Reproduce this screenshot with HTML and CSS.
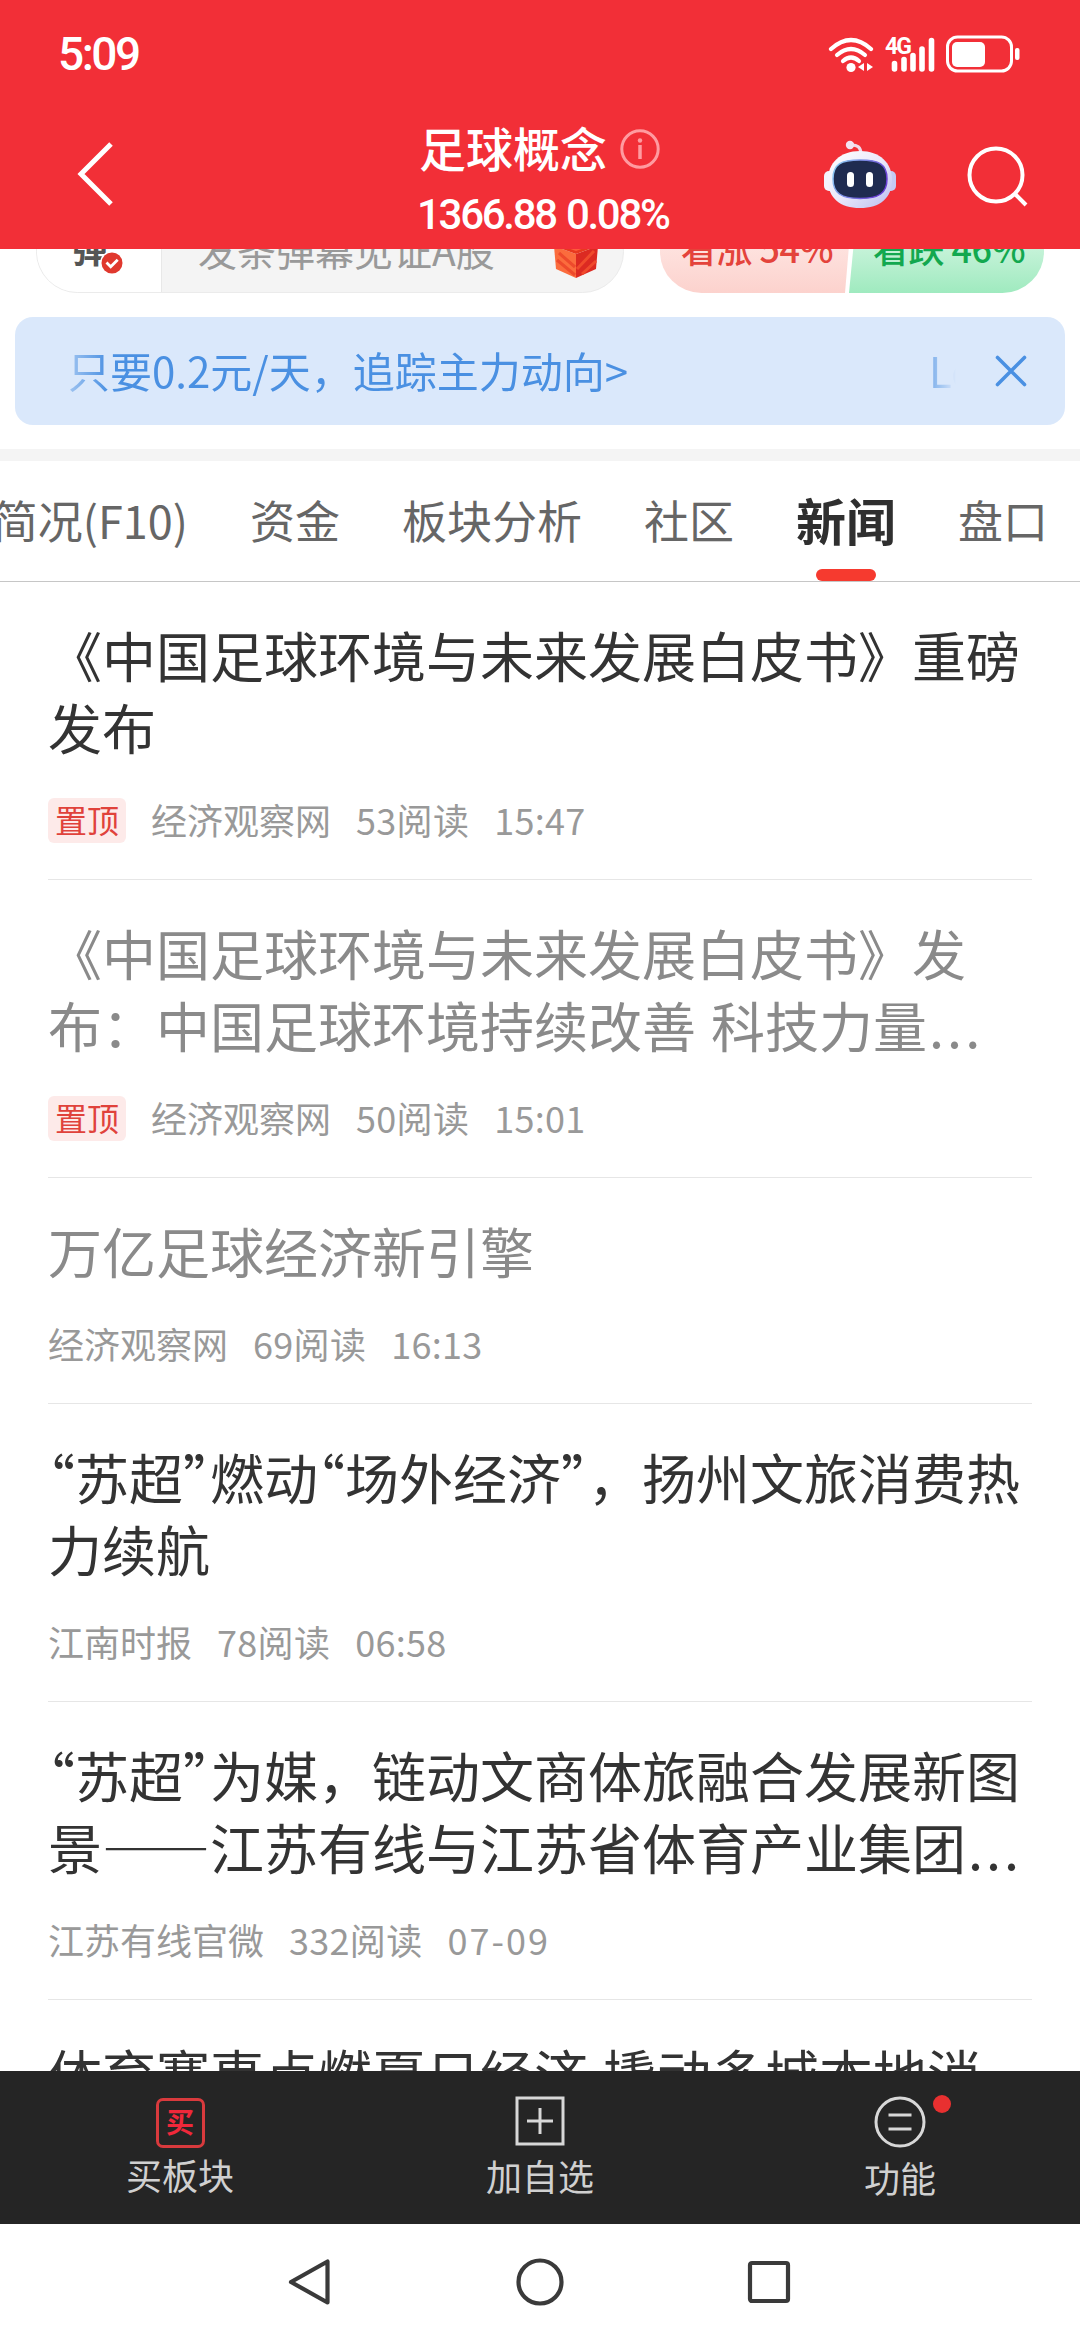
FILE: index.html
```html
<!DOCTYPE html>
<html lang="zh-CN">
<head>
    <meta charset="UTF-8">
    <meta name="viewport" content="width=device-width, initial-scale=1.0">
    <title>足球概念</title>
    <link rel="stylesheet" href="styles.css">
</head>
<body>
    <div class="app">
        <header class="header">
            <div class="status-bar">
                <span class="clock">5:09</span>
                <svg class="status-icons" width="192" height="38" viewBox="0 0 192 38" fill="none" stroke="#fff" stroke-linecap="round">
                    <path d="M3 14 Q23 -4 43 14" stroke-width="4.200"/>
                    <path d="M9 20 Q23 8 37 20" stroke-width="4.200"/>
                    <path d="M15 26 Q23 19 31 26" stroke-width="4.200"/>
                    <circle cx="23" cy="32.500" r="4.600" fill="#fff" stroke="none"/>
                    <path d="M36 28v8l-6-4zM39 28v8l6-4z" fill="#fff" stroke="none"/>
                    <text x="57" y="18.500" class="net-label">4G</text>
                    <path d="M66.500 28.500v5.500M76 24.500v9.500M85 20.500v13.500M94 14v20M103.500 5.500v28.500" stroke-width="5.600"/>
                    <rect x="119.500" y="2" width="64" height="34" rx="10" stroke-width="3"/>
                    <rect x="124" y="7" width="33" height="25" rx="5" fill="#fff" stroke="none"/>
                    <rect x="187" y="13" width="4.500" height="12" rx="2" fill="#fff" stroke="none"/>
                </svg>
            </div>
            <div class="title-bar">
                <svg class="back" width="40" height="68" viewBox="0 0 40 68" fill="none" stroke="#fff" stroke-width="5">
                    <path d="M35 4 L5 34 L35 64"/>
                </svg>
                <div class="title-box">
                    <div class="title">足球概念
                        <svg width="40" height="40" viewBox="0 0 40 40" fill="none" stroke="#ff9ba0" stroke-width="3">
                            <circle cx="20" cy="20" r="18.200"/>
                            <path d="M20 16v14" stroke-width="3.500"/>
                            <circle cx="20" cy="11.500" r="2.200" fill="#ff9ba0" stroke="none"/>
                        </svg>
                    </div>
                    <div class="quote-line">1366.88 0.08%</div>
                </div>
                <svg class="robot" width="74" height="70" viewBox="0 0 74 70">
                    <defs>
                        <linearGradient id="shell" x1="0" y1="0" x2="1" y2="1">
                            <stop offset="0" stop-color="#fff"/>
                            <stop offset="0.5" stop-color="#ebe9fa"/>
                            <stop offset="1" stop-color="#b9bdf0"/>
                        </linearGradient>
                        <linearGradient id="rim" x1="0" y1="0" x2="1" y2="0.4">
                            <stop offset="0" stop-color="#8fd6f5"/>
                            <stop offset="1" stop-color="#6a3fd6"/>
                        </linearGradient>
                    </defs>
                    <rect x="1" y="32" width="12" height="20" rx="5" fill="#f4f3fd"/>
                    <rect x="61" y="32" width="12" height="20" rx="5" fill="#c5cbf4"/>
                    <path d="M27 6 Q38 5 38 15" fill="none" stroke="#f1d9ea" stroke-width="3"/>
                    <circle cx="27" cy="6" r="4.200" fill="#f3e2f2"/>
                    <path d="M37 12 C57 12 69 24 69 41 C69 59 57 69 37 69 C17 69 5 59 5 41 C5 24 17 12 37 12z" fill="url(#shell)"/>
                    <path d="M37 21 C56 21 64 25 64 40 C64 54 56 59.500 37 59.500 C18 59.500 10 54 10 40 C10 25 18 21 37 21z" fill="#1f2b50" stroke="url(#rim)" stroke-width="1.500"/>
                    <rect x="24" y="33" width="7" height="15" rx="3.500" fill="#fff"/>
                    <rect x="43" y="33" width="7" height="15" rx="3.500" fill="#fff"/>
                </svg>
                <svg class="search" width="62" height="62" viewBox="0 0 62 62" fill="none" stroke="#fff" stroke-width="4">
                    <circle cx="30" cy="30" r="26.500"/>
                    <path d="M49 49 L60 60"/>
                </svg>
            </div>
        </header>

        <main class="content">
            <div class="top-row">
                <div class="danmu">
                    <div class="danmu-switch">
                        <span class="danmu-label">弹</span>
                        <svg class="danmu-check" width="24" height="24" viewBox="0 0 24 24">
                            <circle cx="12" cy="12" r="12" fill="#fff"/>
                            <circle cx="12" cy="12" r="10.500" fill="#e0382e"/>
                            <path d="M6.500 11.500l4.200 4.200 7-7" fill="none" stroke="#fff" stroke-width="2.800"/>
                        </svg>
                    </div>
                    <span class="danmu-input">发条弹幕见证A股</span>
                    <svg class="gift" width="46" height="50" viewBox="0 0 46 50">
                        <path d="M1 14 L23 6 L45 14 L23 24z" fill="#ff5a3a"/>
                        <path d="M1 17 L23 25 L23 49 L3 40z" fill="#fb6c3d"/>
                        <path d="M45 17 L23 25 L23 49 L43 40z" fill="#dc2a22"/>
                        <path d="M6 24l16 14M4 31l18 15" stroke="#ee4a2c" stroke-width="3"/>
                        <path d="M41 22l-17 18M43 32l-14 13" stroke="#f04a2c" stroke-width="3"/>
                        <path d="M1 14 L23 22 L45 14 L45 17 L23 25 L1 17z" fill="#e8391f"/>
                    </svg>
                </div>
                <div class="vote">
                    <div class="vote-up">看涨 54%</div>
                    <div class="vote-down">看跌 46%</div>
                </div>
            </div>

            <div class="banner">
                <div class="marquee">
                    <span>只要0.2元/天，追踪主力动向&gt;</span>
                    <span>Lo</span>
                </div>
                <svg class="banner-close" width="32" height="32" viewBox="0 0 32 32" stroke="#4a90e2" stroke-width="3.600" stroke-linecap="round">
                    <path d="M2.500 2.500 L29.500 29.500 M29.500 2.500 L2.500 29.500"/>
                </svg>
            </div>

            <nav class="tabs">
                <span class="tab">简况(F10)</span>
                <span class="tab">资金</span>
                <span class="tab">板块分析</span>
                <span class="tab">社区</span>
                <span class="tab active">新闻</span>
                <span class="tab">盘口</span>
            </nav>

            <div class="news-list">
                <article class="news">
                    <h2>《中国足球环境与未来发展白皮书》重磅<br>发布</h2>
                    <div class="meta"><span class="top-tag">置顶</span><span>经济观察网</span><span class="num">53阅读</span><span class="num">15:47</span></div>
                </article>
                <article class="news read">
                    <h2>《中国足球环境与未来发展白皮书》发<br>布：中国足球环境持续改善 科技力量<span class="dots">...</span></h2>
                    <div class="meta"><span class="top-tag">置顶</span><span>经济观察网</span><span class="num">50阅读</span><span class="num">15:01</span></div>
                </article>
                <article class="news read">
                    <h2>万亿足球经济新引擎</h2>
                    <div class="meta"><span>经济观察网</span><span class="num">69阅读</span><span class="num">16:13</span></div>
                </article>
                <article class="news">
                    <h2><span class="q">“</span>苏超<span class="q">”</span>燃动<span class="q">“</span>场外经济<span class="q">”</span>，扬州文旅消费热<br>力续航</h2>
                    <div class="meta"><span>江南时报</span><span class="num">78阅读</span><span class="num">06:58</span></div>
                </article>
                <article class="news">
                    <h2><span class="q">“</span>苏超<span class="q">”</span>为媒，链动文商体旅融合发展新图<br>景——江苏有线与江苏省体育产业集团<span class="dots">...</span></h2>
                    <div class="meta"><span>江苏有线官微</span><span class="num">332阅读</span><span class="num date">07-09</span></div>
                </article>
                <article class="news">
                    <h2>体育赛事点燃夏日经济 撬动多城本地消</h2>
                </article>
            </div>
        </main>

        <footer class="toolbar">
            <div class="tool">
                <span class="buy-icon">买</span>
                <span>买板块</span>
            </div>
            <div class="tool tool-low">
                <svg width="50" height="50" viewBox="0 0 50 50" fill="none" stroke="#d8d8d8" stroke-width="3">
                    <rect x="2" y="2" width="46" height="46"/>
                    <path d="M12 25h26M25 12v26"/>
                </svg>
                <span>加自选</span>
            </div>
            <div class="tool tool-low">
                <svg width="52" height="52" viewBox="0 0 52 52" fill="none" stroke="#d8d8d8" stroke-width="3">
                    <circle cx="26" cy="26" r="24"/>
                    <path d="M14.500 19h23M14.500 33h23"/>
                </svg>
                <span>功能</span>
                <i class="red-dot"></i>
            </div>
        </footer>

        <div class="system-nav">
            <svg width="50" height="50" viewBox="0 0 50 50"><path d="M41.500 4.500 V45.500 L5 25z"/></svg>
            <svg width="50" height="50" viewBox="0 0 50 50"><circle cx="25" cy="25" r="21.500"/></svg>
            <svg width="50" height="50" viewBox="0 0 50 50"><rect x="6" y="6" width="38" height="38" rx="2"/></svg>
        </div>
    </div>
</body>
</html>
```

FILE: styles.css
```css
* {
    box-sizing: border-box;
}
body {
    margin: 0;
    background: #fff;
    font-family: "Noto Sans CJK SC", "Noto Sans", sans-serif;
    text-spacing-trim: space-all;
}
svg {
    display: block;
    flex: none;
}
.app {
    width: 1080px;
    height: 2340px;
    display: flex;
    flex-direction: column;
    overflow: hidden;
    white-space: nowrap;
}

/* header */
.header {
    height: 249px;
    flex: none;
    background: #f22f37;
    color: #fff;
}
.status-bar {
    height: 108px;
    padding: 0 60px 0 58px;
    display: flex;
    align-items: center;
    justify-content: space-between;
}
.clock {
    font-family: Roboto, sans-serif;
    font-size: 46px;
    font-weight: 500;
    letter-spacing: -2.5px;
}
.net-label {
    font-family: Roboto, sans-serif;
    font-size: 23px;
    font-weight: 700;
    letter-spacing: -2px;
    fill: #fff;
    stroke: none;
}
.title-bar {
    height: 141px;
    display: grid;
    grid-template-columns: 417px 1fr 74px 69px 62px 52px;
}
.back {
    margin: 32px 0 0 76px;
}
.title {
    height: 62px;
    margin-top: 8px;
    padding-left: 2px;
    display: flex;
    align-items: center;
    gap: 13px;
    font-size: 47px;
    font-weight: 500;
    line-height: 62px;
}
.title svg {
    margin-top: 4px;
}
.quote-line {
    margin-top: 12px;
    font-family: Roboto, sans-serif;
    font-size: 42px;
    font-weight: 500;
    line-height: 50px;
    letter-spacing: -2.3px;
    word-spacing: 2px;
}
.robot {
    margin-top: 31px;
}
.search {
    grid-column: 5;
    margin-top: 37px;
}

/* danmu and vote row, scrolled under the header */
.content {
    flex: 1;
    min-height: 0;
    overflow: hidden;
}
.top-row {
    height: 83px;
    margin: -39px 36px 24px;
    display: flex;
    justify-content: space-between;
}
.danmu {
    width: 588px;
    padding-right: 24px;
    display: flex;
    align-items: center;
    border: 1px solid #ebebeb;
    border-radius: 42px;
    background: #f4f4f4;
    overflow: hidden;
}
.danmu-switch {
    width: 125px;
    height: 100%;
    padding-left: 35px;
    position: relative;
    display: flex;
    align-items: center;
    background: #fff;
    border-right: 1px solid #e8e8e8;
}
.danmu-label {
    margin-top: -10px;
    color: #555;
    font-size: 36px;
    font-weight: 700;
}
.danmu-check {
    position: absolute;
    left: 63px;
    top: 40px;
}
.danmu-input {
    flex: 1;
    margin-top: -5px;
    padding-left: 36px;
    color: #999;
    font-size: 39px;
}
.gift {
    margin-top: 4px;
}
.vote {
    width: 384px;
    display: flex;
    font-size: 36px;
    font-weight: 500;
    line-height: 74px;
    letter-spacing: -0.5px;
    border-radius: 42px;
    overflow: hidden;
}
.vote-up {
    width: 192px;
    padding-left: 21px;
    background: linear-gradient(#ffefed, #fcd2cd);
    color: #e4433b;
    clip-path: polygon(0 0, 100% 0, 185px 100%, 0 100%);
}
.vote-down {
    width: 195px;
    margin-left: -3px;
    padding-left: 24px;
    background: linear-gradient(#e6faee, #9feabf);
    color: #12a84f;
    clip-path: polygon(8px 0, 100% 0, 100% 100%, 0 100%);
}

/* blue banner */
.banner {
    height: 108px;
    margin: 0 15px 24px;
    padding: 0 38px 0 53px;
    display: flex;
    align-items: center;
    justify-content: space-between;
    border-radius: 18px;
    background: #dae8fb;
    color: #4a90e2;
    font-size: 42px;
}
.marquee {
    width: 888px;
    margin-top: -4px;
    display: flex;
    gap: 301px;
    overflow: hidden;
    -webkit-mask-image: linear-gradient(90deg, rgba(0,0,0,0.4), #000 40px, #000 848px, transparent);
    mask-image: linear-gradient(90deg, rgba(0,0,0,0.4), #000 40px, #000 848px, transparent);
}

/* tabs */
.tabs {
    height: 133px;
    padding-right: 32px;
    display: flex;
    justify-content: flex-end;
    gap: 62px;
    border-top: 12px solid #f4f4f4;
    border-bottom: 1px solid #c6c6c6;
    color: #666;
    font-size: 45px;
    line-height: 117px;
}
.tab.active {
    position: relative;
    color: #2f2f2f;
    font-size: 50px;
    font-weight: 700;
}
.tab.active::after {
    content: "";
    position: absolute;
    left: 20px;
    bottom: 0;
    width: 60px;
    height: 12px;
    border-radius: 6px;
    background: #f63a2f;
}

/* news list */
.news-list {
    padding: 0 48px;
}
.news {
    padding: 37px 0 35px;
    border-bottom: 1px solid #e6e6e6;
}
.news h2 {
    margin: 0;
    color: #333;
    font-size: 54px;
    font-weight: 400;
    line-height: 72px;
    word-spacing: 3px;
}
.news.read h2 {
    color: #8a8a8a;
}
.q {
    font-feature-settings: "halt";
}
.dots {
    padding-left: 2px;
    letter-spacing: 3px;
}
.meta {
    height: 46px;
    margin-top: 35px;
    display: flex;
    gap: 25px;
    color: #999;
    font-size: 36px;
    line-height: 42px;
}
.num {
    letter-spacing: 0.3px;
}
.date {
    letter-spacing: 2px;
}
.top-tag {
    width: 78px;
    height: 45px;
    border-radius: 6px;
    background: #fdeae9;
    color: #e0423b;
    font-size: 32px;
    line-height: 43px;
    text-align: center;
}

/* bottom toolbar */
.toolbar {
    height: 153px;
    flex: none;
    display: flex;
    background: #252525;
    color: #d0d0d0;
    font-size: 36px;
    line-height: 50px;
}
.tool {
    flex: 1;
    position: relative;
    padding-top: 27px;
    display: flex;
    flex-direction: column;
    align-items: center;
    gap: 1px;
}
.tool-low {
    padding-top: 25px;
    gap: 4px;
}
.buy-icon {
    width: 49px;
    height: 50px;
    border: 3px solid #d93a3d;
    border-radius: 7px;
    color: #f0283a;
    font-size: 28px;
    font-weight: 700;
    line-height: 40px;
    text-align: center;
}
.red-dot {
    position: absolute;
    left: 213px;
    top: 24px;
    width: 18px;
    height: 18px;
    border-radius: 50%;
    background: #e83030;
}

/* system navigation */
.system-nav {
    height: 116px;
    flex: none;
    display: flex;
    align-items: center;
    justify-content: center;
    gap: 179px;
}
.system-nav svg {
    fill: none;
    stroke: #3a3a3a;
    stroke-width: 4.2;
    stroke-linejoin: round;
}
```
